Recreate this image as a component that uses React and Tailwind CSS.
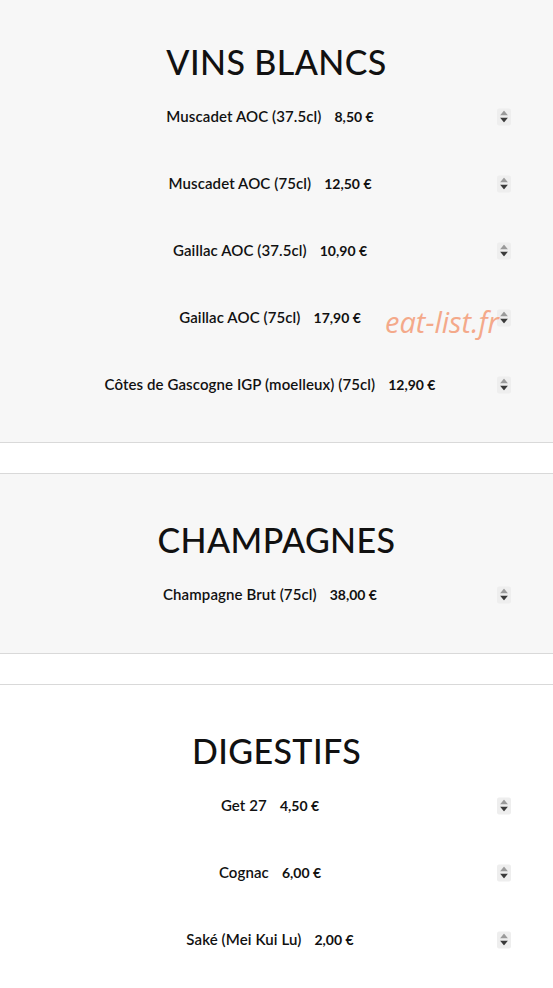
const SECTIONS = [
  {
    title: 'VINS BLANCS',
    bg: 'bg-[#f7f7f7]',
    items: [
      ['Muscadet AOC (37.5cl)', '8,50 €'],
      ['Muscadet AOC (75cl)', '12,50 €'],
      ['Gaillac AOC (37.5cl)', '10,90 €'],
      ['Gaillac AOC (75cl)', '17,90 €'],
      ['Côtes de Gascogne IGP (moelleux) (75cl)', '12,90 €'],
    ],
  },
  {
    title: 'CHAMPAGNES',
    bg: 'bg-[#f7f7f7]',
    items: [['Champagne Brut (75cl)', '38,00 €']],
  },
  {
    title: 'DIGESTIFS',
    bg: 'bg-white',
    items: [
      ['Get 27', '4,50 €'],
      ['Cognac', '6,00 €'],
      ['Saké (Mei Kui Lu)', '2,00 €'],
    ],
  },
];

function Spinner() {
  return (
    <div className="absolute right-[42px] top-1/2 -translate-y-1/2 flex h-[17px] w-[14px] flex-col items-center justify-center gap-[2px] rounded-[2px] bg-[#eeeeee]">
      <svg width="8" height="5" viewBox="0 0 8 5">
        <path d="M4 0 L8 5 L0 5 Z" fill="#9a9a9a" />
      </svg>
      <svg width="8" height="5" viewBox="0 0 8 5">
        <path d="M0 0 L8 0 L4 5 Z" fill="#3a3a3a" />
      </svg>
    </div>
  );
}

function Section({ title, bg, items, first, pb }) {
  return (
    <section
      className={`${bg} ${first ? 'pt-[45px]' : 'border-t border-[#d9d9d9] pt-[49px]'} ${
        bg !== 'bg-white' ? 'border-b border-[#d9d9d9]' : ''
      } ${pb}`}
    >
      <h2 className="text-center text-[34px] leading-[34px] font-medium tracking-[0.4px] text-[#111]">
        {title}
      </h2>
      <div className="mt-[4px]">
        {items.map(([name, price]) => (
          <div key={name} className="relative flex h-[67px] items-center justify-center pr-[13px]">
            <span className="text-[15px] font-semibold tracking-[0.1px] text-[#111]">{name}</span>
            <span className="ml-[13px] text-[14px] font-bold text-[#111]">{price}</span>
            <Spinner />
          </div>
        ))}
      </div>
    </section>
  );
}

export default function App() {
  return (
    <div className="relative min-h-[988px] bg-white font-['Lato',sans-serif]">
      {SECTIONS.map((s, i) => (
        <div key={s.title} className={i > 0 ? 'mt-[30px]' : ''}>
          <Section {...s} first={i === 0} pb={i === 1 ? 'pb-[25px]' : 'pb-[24px]'} />
        </div>
      ))}
      <div className="absolute left-[385px] top-[300px] text-[29px] italic text-[#f4a98a] font-['Open_Sans',sans-serif] pointer-events-none">
        eat-list.fr
      </div>
    </div>
  );
}
